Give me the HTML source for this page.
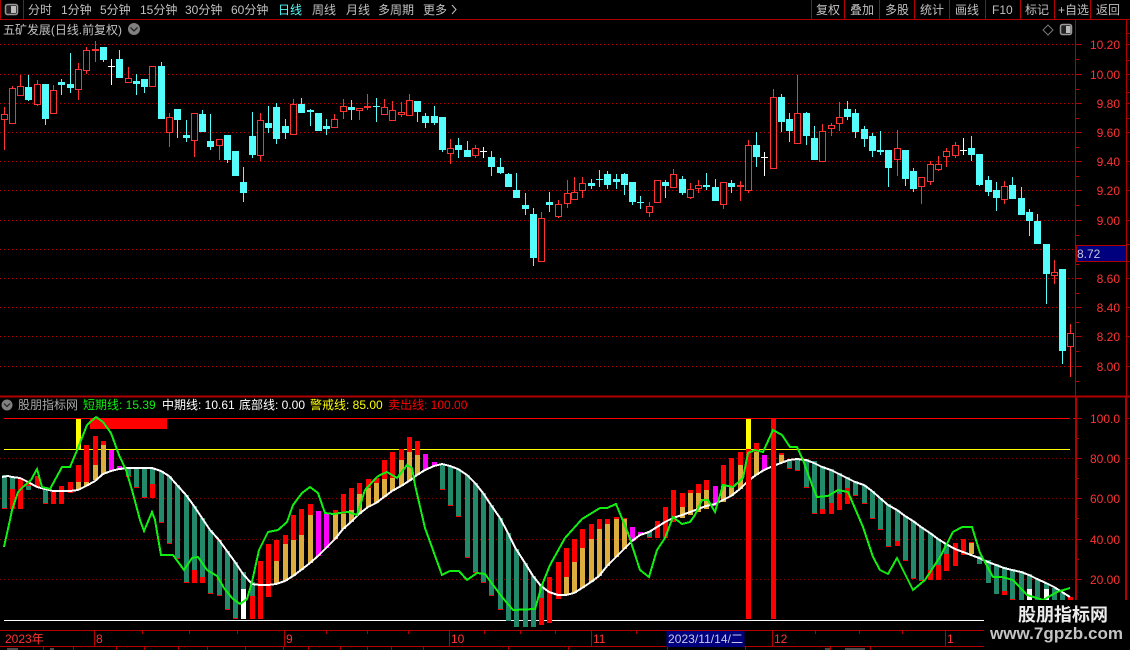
<!DOCTYPE html>
<html><head><meta charset="utf-8"><style>
html,body{margin:0;padding:0;background:#000;width:1130px;height:650px;overflow:hidden}
svg{display:block}
text{font-family:"Liberation Sans","WenQuanYi Zen Hei","Noto Sans CJK SC",sans-serif;font-size:12px}
.t{fill:#c0c0c0}
.a{fill:#ff3232;text-anchor:end}
</style></head><body>
<svg width="1130" height="650" viewBox="0 0 1130 650">
<rect width="1130" height="650" fill="#000"/>
<!-- frame lines -->
<g shape-rendering="crispEdges" fill="none">
<path d="M0 19.5H1130M0 630.5H984M0 646.5H984M1075.5 19V396M1126.5 19V396" stroke="#b00000"/>
<path d="M0 396.5H1130M1076 396V630M1126 396V600" stroke="#b00000" stroke-width="2"/>
<path d="M23.5 0V19M0.5 0V19M811.5 0V19M844.5 0V19M879.5 0V19M914.5 0V19M949.5 0V19M985.5 0V19M1020.5 0V19M1054.5 0V19M1090.5 0V19" stroke="#b00000"/>
<path d="M0 44.5H1075M0 74.5H1075M0 103.5H1075M0 132.5H1075M0 161.5H1075M0 190.5H1075M0 220.5H1075M0 249.5H1075M0 278.5H1075M0 307.5H1075M0 336.5H1075M0 366.5H1075" stroke="#c00000" stroke-dasharray="1 3"/>
<path d="M0 458.5H1075M0 498.5H1075M0 539.5H1075M0 579.5H1075" stroke="#900000" stroke-dasharray="1 3"/>
<path d="M1076 44.5h6M1076 74.5h6M1076 103.5h6M1076 132.5h6M1076 161.5h6M1076 190.5h6M1076 220.5h6M1076 278.5h6M1076 307.5h6M1076 336.5h6M1076 366.5h6M1076 59.5h3M1076 89.5h3M1076 118.5h3M1076 147.5h3M1076 176.5h3M1076 205.5h3M1076 235.5h3M1076 264.5h3M1076 293.5h3M1076 322.5h3M1076 351.5h3M1076 381.5h3M1077 418.5h5M1077 458.5h5M1077 498.5h5M1077 539.5h5M1077 579.5h5M1077 438.5h2M1077 478.5h2M1077 518.5h2M1077 559.5h2M1077 600.5h2M1127 33.5h3M1127 44.5h3M1127 60.5h3M1127 74.5h3M1127 92.5h3M1127 103.5h3M1127 118.5h3M1127 132.5h3M1127 161.5h3M1127 190.5h3M1127 220.5h3M1127 244.5h3M1127 261.5h3M1127 278.5h3M1127 307.5h3M1127 336.5h3M1127 366.5h3M1127 418.5h3M1127 458.5h3" stroke="#b00000"/>
<path d="M43.5 647V650M73.5 647V650M116.5 647V650M144.5 647V650M178.5 647V650M207.5 647V650M245.5 647V650M283.5 647V650M308.5 647V650M340.5 647V650M367.5 647V650M391.5 647V650M423.5 647V650M508.5 647V650M568.5 647V650M667.5 647V650M745.5 647V650M830.5 647V650M870.5 647V650M94.5 630V646M284.5 630V646M449.5 630V646M591.5 630V646M772.5 630V646M945.5 630V646M142.5 630V634M189.5 630V634M237.5 630V634M326.5 630V634M367.5 630V634M408.5 630V634M484.5 630V634M520.5 630V634M555.5 630V634M636.5 630V634M815.5 630V634M859.5 630V634M902.5 630V634" stroke="#b00000"/>
</g>

<!-- candles -->
<g shape-rendering="crispEdges" fill="none">
<path stroke="#54fcfc" d="M28.5 75V101M45.5 84V125M61.5 79V95M70.5 53V93M103.5 47V62M119.5 50V78M136.5 74V95M144.5 79V93M161.5 62V119M177.5 109V138M186.5 120V142M202.5 110V132M210.5 114V150M227.5 135V163M243.5 167V202M252.5 112V158M268.5 106V133M276.5 103V144M285.5 119V139M301.5 98V113M310.5 109V126M318.5 113V131M326.5 119V135M351.5 100V120M376.5 98V122M417.5 101V122M425.5 113V128M434.5 106V125M442.5 117V152M458.5 138V158M467.5 141V157M491.5 151V176M500.5 158V174M508.5 173V187M516.5 173V198M525.5 193V215M533.5 208V266M549.5 192V212M591.5 179V189M599.5 170V187M607.5 171V189M616.5 174V189M624.5 173V195M632.5 182V205M640.5 196V209M665.5 180V198M682.5 176V195M706.5 173V190M715.5 179V201M731.5 180V193M756.5 132V167M781.5 94V132M789.5 113V142M806.5 112V145M814.5 126V160M847.5 101V120M855.5 109V138M864.5 126V147M872.5 133V157M880.5 131V155M888.5 150V187M905.5 150V186M913.5 168V192M971.5 136V161M979.5 154V186M988.5 176V196M996.5 182V211M1012.5 177V199M1021.5 187V215M1029.5 209V236M1037.5 214V244M1046.5 244V304M1062.5 269V364"/>
<path stroke="#54fcfc" stroke-width="7" d="M28.5 87V100M45.5 84V119M61.5 82V85M70.5 84V88M103.5 47V60M119.5 59V78M136.5 81V84M144.5 79V87M161.5 66V119M177.5 109V120M186.5 135V138M202.5 114V132M210.5 141V147M227.5 135V160M235.5 151V176M243.5 182V193M252.5 136V155M268.5 123V128M276.5 107V139M285.5 126V133M301.5 104V113M310.5 110V112M318.5 113V131M326.5 126V129M351.5 107V110M376.5 106V107M417.5 101V112M425.5 116V123M434.5 116V123M442.5 117V150M458.5 145V150M467.5 150V157M491.5 157V167M500.5 167V173M508.5 174V187M516.5 190V198M525.5 205V209M533.5 214V258M549.5 202V205M591.5 183V186M599.5 179V180M607.5 174V185M616.5 179V182M624.5 174V185M632.5 182V202M640.5 202V203M665.5 182V186M682.5 179V193M706.5 185V187M715.5 187V201M731.5 183V187M756.5 145V157M781.5 97V122M789.5 119V131M806.5 113V136M814.5 138V160M847.5 109V117M855.5 113V132M864.5 129V139M872.5 136V151M880.5 150V152M888.5 150V168M905.5 150V179M913.5 171V189M971.5 148V155M979.5 154V185M988.5 180V192M996.5 190V198M1012.5 185V199M1021.5 198V215M1029.5 212V221M1037.5 221V244M1046.5 244V274M1062.5 269V351"/>
<path stroke="#ff3232" d="M4.5 107V150M12.5 86V123M20.5 75V95M37.5 80V106M53.5 85V113M78.5 63V100M86.5 47V74M95.5 41V62M128.5 67V82M169.5 113V147M194.5 113V157M219.5 139V160M260.5 113V161M293.5 99V134M334.5 114V128M343.5 99V119M359.5 108V120M367.5 94V110M384.5 99V114M392.5 101V120M401.5 102V117M409.5 94V115M450.5 139V164M475.5 145V158M541.5 212V261M558.5 200V218M567.5 180V208M574.5 177V199M582.5 177V198M649.5 202V217M673.5 169V187M690.5 183V199M698.5 180V193M723.5 182V209M740.5 181V201M748.5 140V193M773.5 89V168M797.5 75V143M822.5 124V161M831.5 123V136M839.5 102V131M897.5 130V176M921.5 177V204M930.5 161V185M938.5 156V171M946.5 148V167M955.5 142V158M1004.5 181V204M1054.5 260V284M1070.5 324V377"/>
<g stroke="#ff3232" fill="#000">
<path d="M1.5 114.5h6v5h-6zM9.5 88.5h6v35h-6zM17.5 86.5h6v9h-6zM34.5 84.5h6v20h-6zM50.5 90.5h6v23h-6zM75.5 69.5h6v20h-6zM83.5 50.5h6v20h-6zM125.5 78.5h6v4h-6zM149.5 66.5h6v20h-6zM166.5 117.5h6v15h-6zM191.5 113.5h6v27h-6zM216.5 139.5h6v6h-6zM257.5 120.5h6v35h-6zM290.5 104.5h6v30h-6zM331.5 119.5h6v8h-6zM340.5 106.5h6v5h-6zM356.5 108.5h6v2h-6zM381.5 107.5h6v7h-6zM389.5 110.5h6v10h-6zM398.5 112.5h6v2h-6zM406.5 100.5h6v15h-6zM447.5 148.5h6v5h-6zM472.5 148.5h6v7h-6zM538.5 218.5h6v43h-6zM555.5 204.5h6v12h-6zM564.5 193.5h6v10h-6zM571.5 192.5h6v7h-6zM579.5 183.5h6v7h-6zM646.5 206.5h6v6h-6zM654.5 180.5h6v22h-6zM670.5 174.5h6v13h-6zM687.5 189.5h6v8h-6zM695.5 185.5h6v3h-6zM720.5 182.5h6v22h-6zM745.5 145.5h6v45h-6zM770.5 97.5h6v71h-6zM794.5 113.5h6v30h-6zM819.5 131.5h6v30h-6zM828.5 125.5h6v3h-6zM836.5 117.5h6v6h-6zM894.5 148.5h6v11h-6zM918.5 177.5h6v9h-6zM927.5 164.5h6v17h-6zM935.5 164.5h6v5h-6zM943.5 151.5h6v5h-6zM952.5 145.5h6v10h-6zM1001.5 186.5h6v13h-6zM1051.5 272.5h6v3h-6zM1067.5 333.5h6v13h-6z"/>
</g>
<path stroke="#ff3232" stroke-width="7" d="M95.5 49V51M367.5 106V108M740.5 185V187"/>
<path stroke="#fff" d="M111.5 59V85M108 66.5h7M483.5 147V158M480 151.5h7M764.5 152V176M761 157.5h7M963.5 138V155M960 150.5h7"/>
</g>

<!-- indicator -->
<g shape-rendering="crispEdges" fill="none">
<path stroke="#fff" d="M4 620.5H984"/>
<path stroke="#ff0000" d="M4 418.5H1070M1073 418.5H1075"/>
<path stroke="#ffff00" d="M4 449.5H1070"/>
<path stroke="#ff0000" stroke-width="10" d="M90 424H167"/>
<path stroke="#ffff00" stroke-width="5" d="M78.5 419V449"/>
<path stroke="#22896a" stroke-width="5" d="M4.5 475V508M12.5 477V489M28.5 486V490M45.5 487V503M128.5 468V476M136.5 469V487M144.5 468V497M152.5 468V484M161.5 471V522M169.5 476V543M177.5 485V558M186.5 495V582M194.5 506V570M202.5 518V577M210.5 530V593M219.5 540V595M227.5 551V609M235.5 562V618M243.5 572V589M252.5 582V596M442.5 464V489M450.5 466V505M458.5 469V516M467.5 475V557M475.5 483V572M483.5 493V582M491.5 505V595M500.5 518V609M508.5 533V621M516.5 549V627M525.5 563V627M533.5 576V627M541.5 585V598M649.5 531V537M789.5 459V468M797.5 459V470M806.5 459V487M814.5 461V513M822.5 466V509M831.5 469V503M839.5 473V494M847.5 477V488M855.5 481V495M864.5 485V503M872.5 491V518M880.5 498V529M888.5 504V546M897.5 510V541M905.5 516V560M913.5 521V578M921.5 527V580M930.5 533V570M938.5 539V565M946.5 544V554M979.5 556V564M988.5 560V583M996.5 564V594M1004.5 567V591M1012.5 569V599M1021.5 571V600M1029.5 574V589M1037.5 579V600M1046.5 583V589M1054.5 588V600M1062.5 593V600"/>
<path stroke="#ff0000" stroke-width="5" d="M4.5 508V509M12.5 489V509M20.5 478V509M28.5 482V486M37.5 476V487M45.5 503V504M53.5 492V504M61.5 486V504M70.5 482V493M78.5 465V482M86.5 445V482M95.5 436V465M103.5 441V445M128.5 476V477M136.5 487V488M144.5 497V498M152.5 484V498M161.5 522V523M169.5 543V544M177.5 558V559M186.5 582V583M194.5 570V583M202.5 577V583M210.5 593V594M219.5 595V596M227.5 609V610M235.5 618V619M252.5 596V619M260.5 561V619M268.5 544V597M276.5 540V561M285.5 535V544M293.5 515V540M301.5 509V535M310.5 504V515M335.5 510V514M343.5 494V514M351.5 488V510M359.5 483V494M368.5 479V488M376.5 478V483M384.5 460V479M392.5 452V478M401.5 449V460M409.5 437V452M417.5 441V455M442.5 489V490M450.5 505V506M458.5 516V517M467.5 557V558M475.5 572V573M483.5 582V583M491.5 595V596M500.5 609V610M541.5 598V625M549.5 577V623M558.5 562V599M566.5 548V577M574.5 539V562M582.5 529V548M591.5 524V539M599.5 519V529M607.5 519V524M616.5 517V519M624.5 518V519M649.5 537V538M657.5 521V538M665.5 507V538M673.5 490V522M682.5 493V507M690.5 490V493M698.5 484V493M706.5 480V490M723.5 465V486M731.5 458V486M740.5 452V465M756.5 443V452M781.5 453V455M789.5 468V469M797.5 470V471M806.5 487V488M814.5 513V514M822.5 509V514M831.5 503V514M839.5 494V510M847.5 488V504M855.5 495V496M864.5 503V504M872.5 518V519M880.5 529V530M888.5 546V547M897.5 541V546M905.5 560V561M913.5 578V579M921.5 580V581M930.5 570V580M938.5 565V580M946.5 554V571M955.5 543V566M963.5 539V555M971.5 542V543M1004.5 591V595M1012.5 599V600M1070.5 597V600"/>
<path stroke="#dcac3c" stroke-width="5" d="M78.5 482V490M86.5 482V486M95.5 465V480M103.5 445V474M276.5 561V584M285.5 544V581M293.5 540V576M301.5 535V570M310.5 515V563M335.5 514V539M343.5 514V529M351.5 510V522M359.5 494V514M368.5 488V507M376.5 483V503M384.5 479V497M392.5 478V491M401.5 460V486M409.5 452V481M417.5 455V475M566.5 577V595M574.5 562V593M582.5 548V588M591.5 539V582M599.5 529V576M607.5 524V566M616.5 519V557M624.5 519V549M682.5 507V518M690.5 493V515M698.5 493V512M706.5 490V509M723.5 486V502M731.5 486V496M740.5 465V489M748.5 458V481M756.5 452V475M773.5 455V466M781.5 455V463M971.5 543V554"/>
<path stroke="#ff00ff" stroke-width="5" d="M111.5 450V471M119.5 466V470M318.5 511V556M326.5 514V548M425.5 454V470M434.5 462V466M632.5 527V541M640.5 532V535M715.5 486V506M764.5 455V470"/>
<path stroke="#fff" stroke-width="5" d="M243.5 589V619M1029.5 589V600M1046.5 589V600"/>
</g>
<polyline fill="none" stroke="#fff" stroke-width="2" shape-rendering="crispEdges" points="2,477 8,476 12,477 20,478 28,482 37,487 45,489 53,491 61,491 70,491 78,490 86,486 95,481 103,474 111,471 119,469 128,468 136,468 144,468 152,468 161,471 169,476 177,485 186,495 194,506 202,518 210,530 219,540 227,551 235,562 243,574 252,584 260,585 268,585 276,584 285,581 293,576 301,570 310,563 318,556 326,548 335,539 343,529 351,522 359,514 368,507 376,503 384,497 392,491 401,486 409,481 417,475 425,470 434,466 442,464 450,466 458,469 467,475 475,483 483,493 491,505 500,518 508,533 516,549 525,563 533,576 541,586 549,592 558,595 566,595 574,593 582,588 591,582 599,576 607,566 616,557 624,549 632,541 640,535 649,532 657,527 665,522 673,518 682,515 690,512 698,509 706,506 715,504 723,500 731,496 740,489 748,481 756,475 764,470 773,466 781,463 789,460 797,459 806,460 814,463 822,467 831,470 839,474 847,478 855,482 864,485 872,491 880,498 888,505 897,510 905,516 913,521 921,527 930,533 938,539 946,544 955,549 963,552 971,555 979,558 988,562 996,565 1004,568 1012,570 1021,572 1029,575 1037,579 1046,583 1054,587 1062,592 1070,597"/>
<path shape-rendering="crispEdges" stroke="#ff0000" stroke-width="5" fill="none" d="M748.5 449V619M773.5 419V619"/>
<path shape-rendering="crispEdges" stroke="#ffff00" stroke-width="5" fill="none" d="M748.5 419V449"/>
<polyline fill="none" stroke="#11ee11" stroke-width="2" shape-rendering="crispEdges" points="4,547 10,520 12,510 18,492 23,487 31,480 37,469 42,487 50,489 62,467 70,467 78,448 87,425 96,417 103,422 111,433 119,455 126,470 132,490 140,520 144,531 152,512 155,520 161,555 173,555 184,570 192,558 198,557 207,570 217,576 224,588 232,598 240,604 247,599 252,582 259,550 268,532 278,530 287,522 293,505 302,493 310,487 318,493 325,513 333,514 340,513 348,512 357,515 365,490 377,477 380,475 387,472 397,478 407,465 412,468 415,485 425,528 442,575 450,571 459,571 467,580 477,573 485,574 493,585 502,597 513,610 535,609 542,585 550,565 565,538 582,519 600,508 607,508 616,504 628,533 640,570 649,577 657,550 665,538 673,517 682,524 690,522 695,515 702,500 708,500 715,512 723,485 733,487 743,478 748,453 755,450 763,452 773,430 782,435 790,447 797,447 803,460 812,485 817,497 828,496 838,490 848,492 863,527 873,557 880,570 888,574 897,558 913,590 925,580 940,557 953,532 962,527 972,527 980,553 993,577 1002,577 1013,580 1027,595 1043,600 1057,592 1070,588"/>

<!-- toolbar -->
<g>
<rect x="5.5" y="4.5" width="12" height="10" rx="2" fill="#222" stroke="#999" stroke-width="1.5"/>
<rect x="11" y="6" width="5" height="7" fill="#bbb"/>
<text class="t" x="28" y="14">分时</text>
<text class="t" x="61" y="14">1分钟</text>
<text class="t" x="100" y="14">5分钟</text>
<text class="t" x="140" y="14">15分钟</text>
<text class="t" x="185" y="14">30分钟</text>
<text class="t" x="231" y="14">60分钟</text>
<text x="278" y="14" fill="#54fcfc">日线</text>
<text class="t" x="312" y="14">周线</text>
<text class="t" x="346" y="14">月线</text>
<text class="t" x="378" y="14">多周期</text>
<text class="t" x="423" y="14">更多</text>
<path d="M452 5l4 4.5-4 4.5" fill="none" stroke="#c0c0c0"/>
<text class="t" x="816" y="14">复权</text>
<text class="t" x="850" y="14">叠加</text>
<text class="t" x="885" y="14">多股</text>
<text class="t" x="920" y="14">统计</text>
<text class="t" x="955" y="14">画线</text>
<text class="t" x="992" y="14">F10</text>
<text class="t" x="1025" y="14">标记</text>
<text class="t" x="1058" y="14">+自选</text>
<text class="t" x="1096" y="14">返回</text>
</g>

<!-- row 2 -->
<text class="t" x="3" y="34" textLength="119">五矿发展(日线.前复权)</text>
<circle cx="134" cy="29" r="6" fill="#808080"/>
<path d="M130.5 27.5l3.5 3.5 3.5-3.5" fill="none" stroke="#222" stroke-width="1.3"/>
<path d="M1048 25l5 5-5 5-5-5z" fill="none" stroke="#777"/>
<rect x="1060.5" y="24.5" width="11" height="10" rx="2" fill="#222" stroke="#999" stroke-width="1.5"/>
<rect x="1066" y="26" width="4.5" height="7" fill="#bbb"/>

<!-- axis labels -->
<text class="a" x="1120" y="49">10.20</text>
<text class="a" x="1120" y="79">10.00</text>
<text class="a" x="1120" y="108">9.80</text>
<text class="a" x="1120" y="137">9.60</text>
<text class="a" x="1120" y="166">9.40</text>
<text class="a" x="1120" y="195">9.20</text>
<text class="a" x="1120" y="225">9.00</text>
<text class="a" x="1120" y="283">8.60</text>
<text class="a" x="1120" y="312">8.40</text>
<text class="a" x="1120" y="341">8.20</text>
<text class="a" x="1120" y="371">8.00</text>
<rect x="1076.5" y="245.5" width="50" height="16" fill="#00007f" stroke="#b00000" shape-rendering="crispEdges"/>
<text x="1077" y="258" fill="#c8c8d8">8.72</text>

<text class="a" x="1120" y="423">100.0</text>
<text class="a" x="1120" y="463">80.00</text>
<text class="a" x="1120" y="503">60.00</text>
<text class="a" x="1120" y="544">40.00</text>
<text class="a" x="1120" y="584">20.00</text>

<!-- legend -->
<circle cx="7" cy="405" r="5.5" fill="#808080"/>
<path d="M4 403.5l3 3 3-3" fill="none" stroke="#222" stroke-width="1.2"/>
<text x="18" y="409" fill="#a8a8a8">股朋指标网</text>
<text x="83" y="409" fill="#11ee11">短期线: 15.39</text>
<text x="162" y="409" fill="#fff">中期线: 10.61</text>
<text x="239" y="409" fill="#fff">底部线: 0.00</text>
<text x="310" y="409" fill="#ffff00">警戒线: 85.00</text>
<text x="388" y="409" fill="#ff0000">卖出线: 100.00</text>

<!-- date axis -->
<text x="5" y="643" fill="#ff3232">2023年</text>
<text x="96" y="643" fill="#ff3232">8</text>
<text x="286" y="643" fill="#ff3232">9</text>
<text x="451" y="643" fill="#ff3232">10</text>
<text x="593" y="643" fill="#ff3232">11</text>
<text x="774" y="643" fill="#ff3232">12</text>
<text x="947" y="643" fill="#ff3232">1</text>
<rect x="666.5" y="631" width="78" height="16" fill="#00007f" shape-rendering="crispEdges"/>
<text x="668" y="643" fill="#c8c8e8" textLength="75">2023/11/14/二</text>
<path d="M7 649h11M50 649h4M825 649h5M845 649h20" stroke="#999" shape-rendering="crispEdges"/>

<!-- watermark -->
<rect x="984" y="600" width="146" height="50" fill="#000"/>
<text x="1018" y="621" fill="#ececec" style="font-size:18px;font-weight:bold" textLength="90">股朋指标网</text>
<text x="990" y="639" fill="#c4c4c4" style="font-size:17px;font-weight:bold" textLength="133">www.7gpzb.com</text>
</svg>
</body></html>
